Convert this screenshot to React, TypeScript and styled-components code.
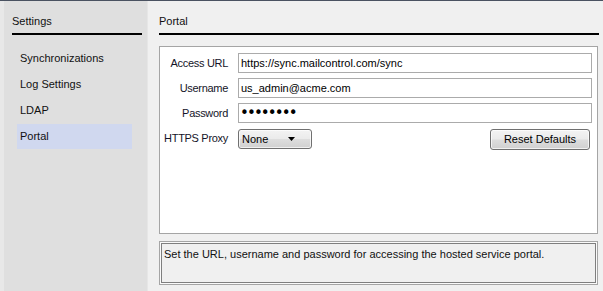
import React from 'react'
import styled, { createGlobalStyle } from 'styled-components'

const Global = createGlobalStyle`
  html, body {
    margin: 0;
    padding: 0;
    background: #f0f0f0;
  }
  body {
    font-family: "Liberation Sans", Arial, sans-serif;
    font-size: 11px;
    color: #111;
  }
`

const Window = styled.div`
  width: 603px;
  height: 291px;
  box-sizing: border-box;
  display: flex;
  border-top: 1px solid #4a5261;
  overflow: hidden;
`

const Sidebar = styled.div`
  width: 148px;
  box-sizing: border-box;
  background: #dfdfdf;
  border-left: 4px solid #e8e8e8;
  border-right: 1px solid #e6e6e6;
  padding: 0 5px 0 8px;
`

const Header = styled.div`
  height: 34px;
  box-sizing: border-box;
  padding-top: 13px;
  line-height: 14px;
  border-bottom: 2px solid #000;
`

const NavList = styled.div`
  margin-top: 11px;
  display: flex;
  flex-direction: column;
  gap: 1px;
`

const NavItem = styled.div<{ $active?: boolean }>`
  margin-left: 5px;
  width: 115px;
  height: 25px;
  line-height: 25px;
  padding-left: 3px;
  box-sizing: border-box;
  background: ${p => (p.$active ? '#d0d8ef' : 'transparent')};
`

const Main = styled.div`
  flex: 1;
  padding: 0 4px 0 11px;
  background: #f0f0f0;
`

const FormBox = styled.div`
  margin: 11px 1px 0 0;
  height: 188px;
  box-sizing: border-box;
  border: 1px solid #a5a5a5;
  background: #fff;
  padding: 6px 5px 0 0;
  display: grid;
  grid-template-columns: 68px 1fr;
  grid-auto-rows: 20px;
  column-gap: 10px;
  row-gap: 5px;
  align-content: start;
`

const Label = styled.label`
  text-align: right;
  line-height: 20px;
  letter-spacing: -0.3px;
  color: #141428;
`

const Field = styled.input`
  height: 20px;
  box-sizing: border-box;
  border: 1px solid #ababab;
  padding: 0 2px;
  margin: 0;
  font-family: "Liberation Sans", Arial, sans-serif;
  font-size: 11px;
  color: #000;
  background: #fff;
  outline: none;
`

const Secret = styled(Field)`
  font-family: "DejaVu Sans", sans-serif;
  font-size: 15px;
  letter-spacing: -1.9px;
  padding-left: 1px;
`

const ProxyRow = styled.div`
  display: flex;
  justify-content: space-between;
  align-items: center;
  padding-right: 2px;
  margin-top: 1px;
`

const winButton = `
  height: 20px;
  box-sizing: border-box;
  border: 1px solid #707070;
  border-radius: 3px;
  background: linear-gradient(#f3f3f3 0%, #ebebeb 48%, #dddddd 52%, #d0d0d0 100%);
  box-shadow: inset 0 0 0 1px rgba(255, 255, 255, 0.7);
  font-family: "Liberation Sans", Arial, sans-serif;
  font-size: 11px;
  color: #000;
`

const Select = styled.div`
  ${winButton}
  width: 74px;
  display: flex;
  align-items: center;
  justify-content: space-between;
  padding: 0 16px 0 3px;
`

const Button = styled.button`
  ${winButton}
  width: 100px;
  height: 21px;
  padding: 0;
  margin-top: 1px;
`

const Description = styled.div`
  margin: 7px 1px 0 0;
  height: 44px;
  box-sizing: border-box;
  border: 1px solid #a5a5a5;
  box-shadow: inset 0 0 0 1px #fafafa, inset 0 0 0 2px #7f7f7f;
  background: #f0f0f0;
  padding: 5px 4px;
  line-height: 14px;
`

const items = ['Synchronizations', 'Log Settings', 'LDAP', 'Portal']

export default function App() {
  return (
    <>
      <Global />
      <Window>
        <Sidebar>
          <Header>Settings</Header>
          <NavList>
            {items.map(i => (
              <NavItem key={i} $active={i === 'Portal'}>
                {i}
              </NavItem>
            ))}
          </NavList>
        </Sidebar>
        <Main>
          <Header>Portal</Header>
          <FormBox>
            <Label>Access URL</Label>
            <Field readOnly value="https://sync.mailcontrol.com/sync" />
            <Label>Username</Label>
            <Field readOnly value="us_admin@acme.com" />
            <Label>Password</Label>
            <Secret readOnly type="password" value="password" />
            <Label>HTTPS Proxy</Label>
            <ProxyRow>
              <Select>
                <span>None</span>
                <svg width="7" height="4" viewBox="0 0 7 4">
                  <polygon points="0,0 7,0 3.5,4" fill="#000" />
                </svg>
              </Select>
              <Button>Reset Defaults</Button>
            </ProxyRow>
          </FormBox>
          <Description>
            Set the URL, username and password for accessing the hosted service portal.
          </Description>
        </Main>
      </Window>
    </>
  )
}
